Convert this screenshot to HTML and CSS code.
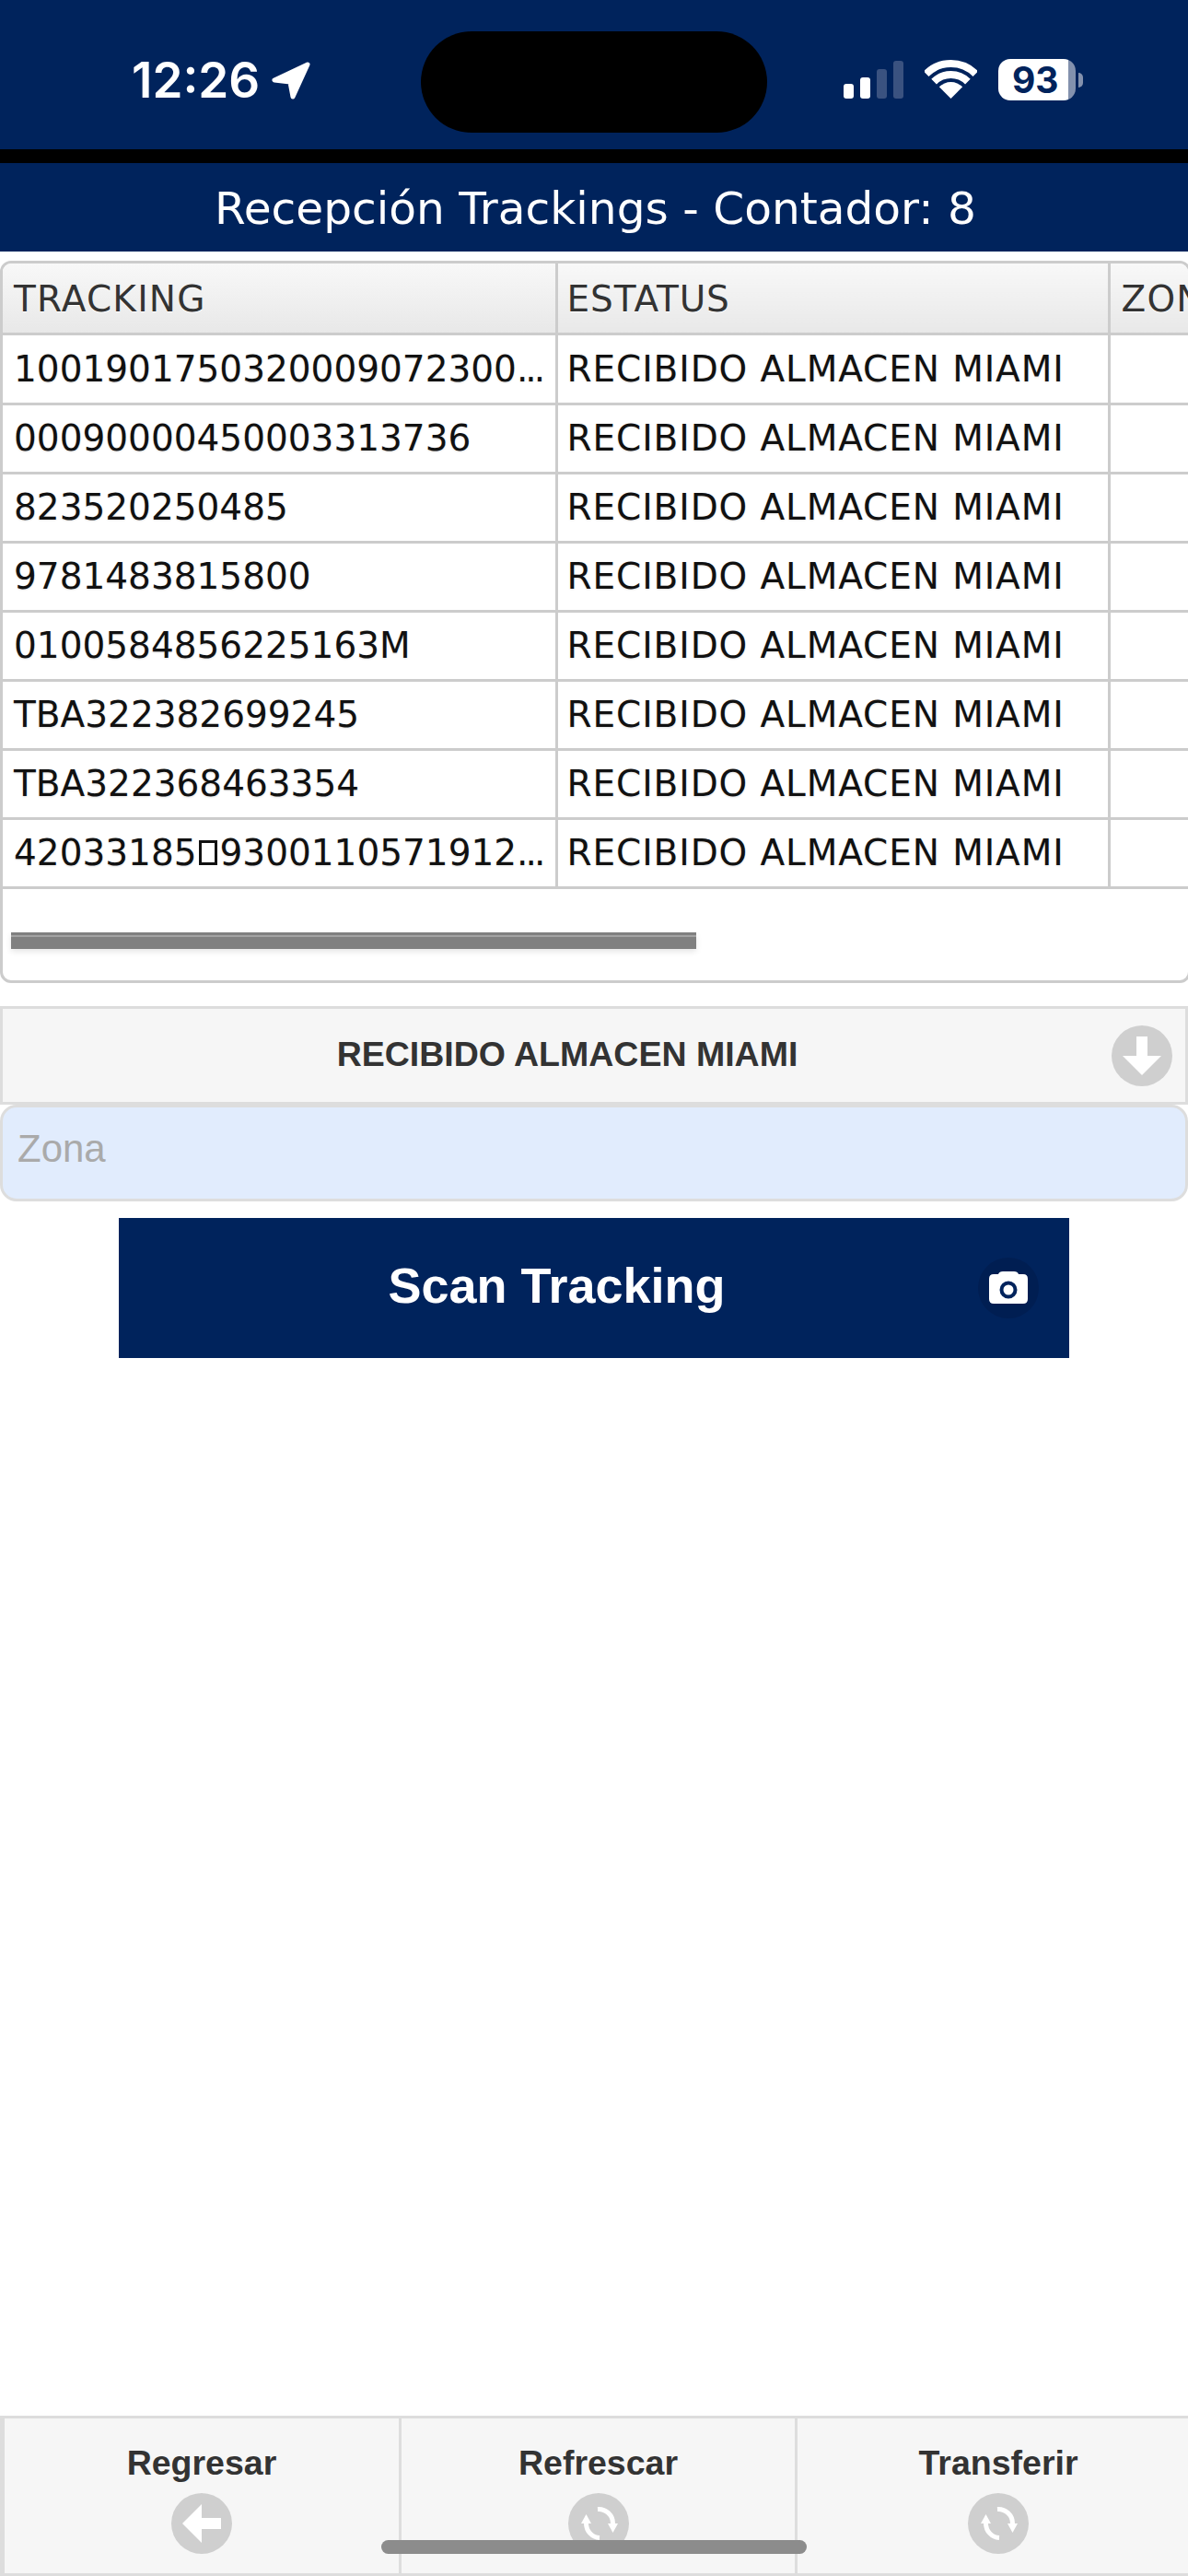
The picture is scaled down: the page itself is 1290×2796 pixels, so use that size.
FILE: index.html
```html
<!DOCTYPE html>
<html lang="en">
<head>
    <meta charset="UTF-8">
    <meta name="viewport" content="width=device-width, initial-scale=1.0">
    <title>Recepción Trackings</title>
    <link rel="stylesheet" href="styles.css">
</head>
<body>

<!-- Status bar -->
<div class="status-bar">
    <div class="status-left">
        <span class="clock">12:26</span>
        <svg class="location" width="42" height="41" viewBox="0 0 42 41"><path d="M39 3 L3 20 L20 22 L23 38 Z" fill="#fff" stroke="#fff" stroke-width="5" stroke-linejoin="round"/></svg>
    </div>
    <div class="island"></div>
    <div class="status-right">
        <div class="signal">
            <span class="bar bar-1"></span>
            <span class="bar bar-2"></span>
            <span class="bar bar-3 off"></span>
            <span class="bar bar-4 off"></span>
        </div>
        <svg class="wifi" width="57" height="42" viewBox="0 0 57 42">
            <path d="M1.63 15.13 A38 38 0 0 1 55.37 15.13" fill="none" stroke="#fff" stroke-width="8"/>
            <path d="M10.12 23.62 A26 26 0 0 1 46.88 23.62" fill="none" stroke="#fff" stroke-width="8"/>
            <path d="M28.5 42 L15.8 29.3 A18 18 0 0 1 41.2 29.3 Z" fill="#fff"/>
        </svg>
        <div class="battery">
            <div class="battery-level">93</div>
            <span class="battery-nub"></span>
        </div>
    </div>
</div>
<div class="divider"></div>

<div class="page-title">Recepción Trackings - Contador: 8</div>

<!-- Trackings table -->
<div class="table-wrap">
    <table class="tracking-table">
        <thead>
            <tr><th>TRACKING</th><th>ESTATUS</th><th>ZONA</th></tr>
        </thead>
        <tbody>
            <tr><td>1001901750320009072300<span class="dots">...</span></td><td>RECIBIDO ALMACEN MIAMI</td><td></td></tr>
            <tr><td>00090000450003313736</td><td>RECIBIDO ALMACEN MIAMI</td><td></td></tr>
            <tr><td>823520250485</td><td>RECIBIDO ALMACEN MIAMI</td><td></td></tr>
            <tr><td>9781483815800</td><td>RECIBIDO ALMACEN MIAMI</td><td></td></tr>
            <tr><td>0100584856225163M</td><td>RECIBIDO ALMACEN MIAMI</td><td></td></tr>
            <tr><td>TBA322382699245</td><td>RECIBIDO ALMACEN MIAMI</td><td></td></tr>
            <tr><td>TBA322368463354</td><td>RECIBIDO ALMACEN MIAMI</td><td></td></tr>
            <tr><td>42033185<span class="bad-char"></span>9300110571912<span class="dots">...</span></td><td>RECIBIDO ALMACEN MIAMI</td><td></td></tr>
        </tbody>
    </table>
    <div class="scroll-track"><div class="scroll-thumb"></div></div>
</div>

<!-- Status select and zone -->
<div class="status-select">
    <span class="select-text">RECIBIDO ALMACEN MIAMI</span>
    <svg class="icon-circle" width="66" height="66" viewBox="0 0 66 66"><circle cx="33" cy="33" r="33" fill="#cfcfcf"/><path d="M27 12 H39 V33 H54 L33 54 L12 33 H27 Z" fill="#fff"/></svg>
</div>
<input class="zone-input" type="text" placeholder="Zona">

<div class="scan-row">
    <button class="scan-btn" type="button">
        <span class="scan-text">Scan Tracking</span>
        <svg class="camera" width="66" height="66" viewBox="0 0 66 66">
            <circle cx="33" cy="33" r="33" fill="#001e52"/>
            <path d="M12 23 Q12 18 17 18 H22 Q23 15 27 15 H39 Q43 15 44 18 H49 Q54 18 54 23 V45 Q54 50 49 50 H17 Q12 50 12 45 Z" fill="#fff"/>
            <circle cx="33" cy="35" r="7.5" fill="#fff" stroke="#00235c" stroke-width="4"/>
        </svg>
    </button>
</div>

<!-- Bottom navigation -->
<div class="bottom-nav">
    <a class="nav-item nav-back">
        <span>Regresar</span>
        <svg width="66" height="66" viewBox="0 0 66 66"><circle cx="33" cy="33" r="33" fill="#cfcfcf"/><path d="M12 33 L33 12 V27 H54 V39 H33 V54 Z" fill="#fff"/></svg>
    </a>
    <a class="nav-item nav-refresh">
        <span>Refrescar</span>
        <svg width="66" height="66" viewBox="0 0 66 66">
            <circle cx="33" cy="33" r="33" fill="#cfcfcf"/>
            <path d="M32 17.5 A15.5 15.5 0 0 1 48.5 33" fill="none" stroke="#fff" stroke-width="5"/>
            <path d="M43 33 H54 L48.5 43 Z" fill="#fff"/>
            <path d="M34 48.5 A15.5 15.5 0 0 1 19.5 33" fill="none" stroke="#fff" stroke-width="5"/>
            <path d="M14 33 H25 L19.5 23 Z" fill="#fff"/>
        </svg>
    </a>
    <a class="nav-item nav-transfer">
        <span>Transferir</span>
        <svg width="66" height="66" viewBox="0 0 66 66">
            <circle cx="33" cy="33" r="33" fill="#cfcfcf"/>
            <path d="M32 17.5 A15.5 15.5 0 0 1 48.5 33" fill="none" stroke="#fff" stroke-width="5"/>
            <path d="M43 33 H54 L48.5 43 Z" fill="#fff"/>
            <path d="M34 48.5 A15.5 15.5 0 0 1 19.5 33" fill="none" stroke="#fff" stroke-width="5"/>
            <path d="M14 33 H25 L19.5 23 Z" fill="#fff"/>
        </svg>
    </a>
</div>
<div class="home-indicator"></div>

</body>
</html>
```

FILE: styles.css
```css
* {
    box-sizing: border-box;
}
body {
    margin: 0;
    height: 2796px;
    overflow: hidden;
    background-color: #fff;
    font-family: "Liberation Sans", Arial, sans-serif;
    display: flex;
    flex-direction: column;
    position: relative;
}

/* status bar */
.status-bar {
    height: 162px;
    background-color: #00235c;
    display: flex;
    align-items: flex-start;
    color: #fff;
}
.status-left {
    width: 457px;
    height: 109px;
    padding-left: 143px;
    padding-top: 59px;
    display: flex;
    align-items: flex-start;
}
.clock {
    font-family: Inter, sans-serif;
    font-weight: 600;
    font-size: 53px;
    line-height: 56px;
    width: 152px;
}
.location {
    margin-top: 8px;
}
.island {
    width: 376px;
    height: 110px;
    margin-top: 34px;
    background-color: #000;
    border-radius: 55px;
}
.status-right {
    flex: 1;
    padding-left: 83px;
    padding-top: 64px;
    display: flex;
    align-items: flex-start;
}
.signal {
    width: 65px;
    height: 43px;
    display: flex;
    align-items: flex-end;
    gap: 7px;
}
.bar {
    width: 11px;
    background-color: #fff;
    border-radius: 3px;
}
.bar.off {
    background-color: #3a5280;
}
.bar-1 { height: 16px; }
.bar-2 { height: 23px; }
.bar-3 { height: 32px; }
.bar-4 { height: 41px; }
.wifi {
    margin-left: 23px;
    margin-top: 1px;
}
.battery {
    width: 93px;
    margin-left: 23px;
    display: flex;
    align-items: center;
}
.battery-level {
    width: 84px;
    height: 45px;
    border-radius: 13px;
    background: linear-gradient(to right, #fff 91%, #8391ad 91%);
    color: #00235c;
    font-family: Inter, sans-serif;
    font-weight: 700;
    font-size: 39px;
    line-height: 45px;
    padding-left: 15px;
    white-space: nowrap;
}
.battery-nub {
    width: 5px;
    height: 16px;
    margin-left: 3px;
    border-radius: 0 5px 5px 0;
    background-color: #8391ad;
}
.divider {
    height: 15px;
    background-color: #000;
}

.page-title {
    height: 96px;
    padding-left: 3px;
    background-color: #00235c;
    color: #fff;
    font-family: "DejaVu Sans", Verdana, sans-serif;
    font-size: 48.6px;
    line-height: 99px;
    text-align: center;
    white-space: nowrap;
}

/* table */
.table-wrap {
    margin-top: 10px;
    margin-right: -3px;
    height: 784px;
    border: 3px solid #ccc;
    border-radius: 12px;
    overflow: hidden;
}
.tracking-table {
    width: 1400px;
    table-layout: fixed;
    border-collapse: collapse;
    font-family: "DejaVu Sans", Verdana, sans-serif;
    font-size: 39px;
}
.tracking-table th:nth-child(1) { width: 601px; }
.tracking-table th:nth-child(2) { width: 600px; }
.tracking-table th,
.tracking-table td {
    padding: 0 0 0 12px;
    text-align: left;
    font-weight: normal;
    white-space: nowrap;
    overflow: hidden;
    border-right: 3px solid #ccc;
    border-bottom: 3px solid #ccc;
}
.tracking-table th {
    height: 76px;
    padding-top: 3px;
    letter-spacing: 1.2px;
    color: #333;
    background: linear-gradient(#f8f8f8, #e8e8e8);
    text-shadow: 0 1px 0 #fff;
}
.tracking-table td {
    height: 75px;
    color: #111;
    text-shadow: 0 1px 2px rgba(0, 0, 0, 0.12);
}
.tracking-table tbody tr:first-child td {
    height: 76px;
}
.tracking-table th:nth-child(2),
.tracking-table td:nth-child(2) {
    padding-left: 10px;
    letter-spacing: 0.9px;
}
.dots {
    letter-spacing: -3px;
}
/* box the browser shows for an unprintable scanner character */
.bad-char {
    display: inline-block;
    width: 20px;
    height: 27px;
    margin: 0 3px 0 2px;
    border: 3px solid #111;
}
.scroll-track {
    padding: 47px 0 0 9px;
}
.scroll-thumb {
    width: 744px;
    height: 18px;
    background-color: #808080;
    border-top: 3px solid #808080;
    box-shadow: inset 0 2px 0 #a3a3a3, 0 3px 6px rgba(0, 0, 0, 0.1);
}

/* status select + zone */
.status-select {
    margin-top: 25px;
    height: 107px;
    background-color: #f6f6f6;
    border: 3px solid #ddd;
    display: flex;
    align-items: center;
    padding-right: 14px;
}
.select-text {
    flex: 1;
    text-align: center;
    font-weight: bold;
    font-size: 37.5px;
    color: #333;
    padding-left: 22px;
    padding-bottom: 3px;
}
.zone-input {
    display: block;
    width: 100%;
    height: 105px;
    padding: 0 16px 10px;
    background-color: #e1ecfd;
    border: 3px solid #ddd;
    border-radius: 18px;
    font-family: "Liberation Sans", Arial, sans-serif;
    font-size: 42px;
    outline: none;
}
.zone-input::placeholder {
    color: #aaa;
}

.scan-row {
    margin-top: 18px;
    display: flex;
    justify-content: center;
}
.scan-btn {
    width: 1032px;
    height: 152px;
    border: none;
    background-color: #00235c;
    color: #fff;
    display: flex;
    align-items: center;
    padding: 0 33px 0 0;
    font-family: "Liberation Sans", Arial, sans-serif;
}
.scan-text {
    flex: 1;
    text-align: center;
    font-weight: bold;
    font-size: 54px;
    padding-left: 18px;
    padding-bottom: 6px;
}

/* bottom navigation */
.bottom-nav {
    margin-top: auto;
    height: 174px;
    background-color: #f6f6f6;
    border: 3px solid #ddd;
    border-left-width: 5px;
    display: grid;
    grid-template-columns: 431px 430px 436px;
    width: 1302px;
}
.nav-item {
    display: flex;
    flex-direction: column;
    align-items: center;
    padding-top: 26px;
    border-right: 3px solid #ddd;
    font-weight: bold;
    font-size: 37.5px;
    line-height: 45px;
    color: #333;
}
.nav-item span {
    margin-bottom: 10px;
}
.nav-item:last-child {
    border-right: none;
}
.home-indicator {
    position: absolute;
    left: 414px;
    top: 2757px;
    width: 462px;
    height: 15px;
    border-radius: 8px;
    background-color: #8c8c8c;
}
```
